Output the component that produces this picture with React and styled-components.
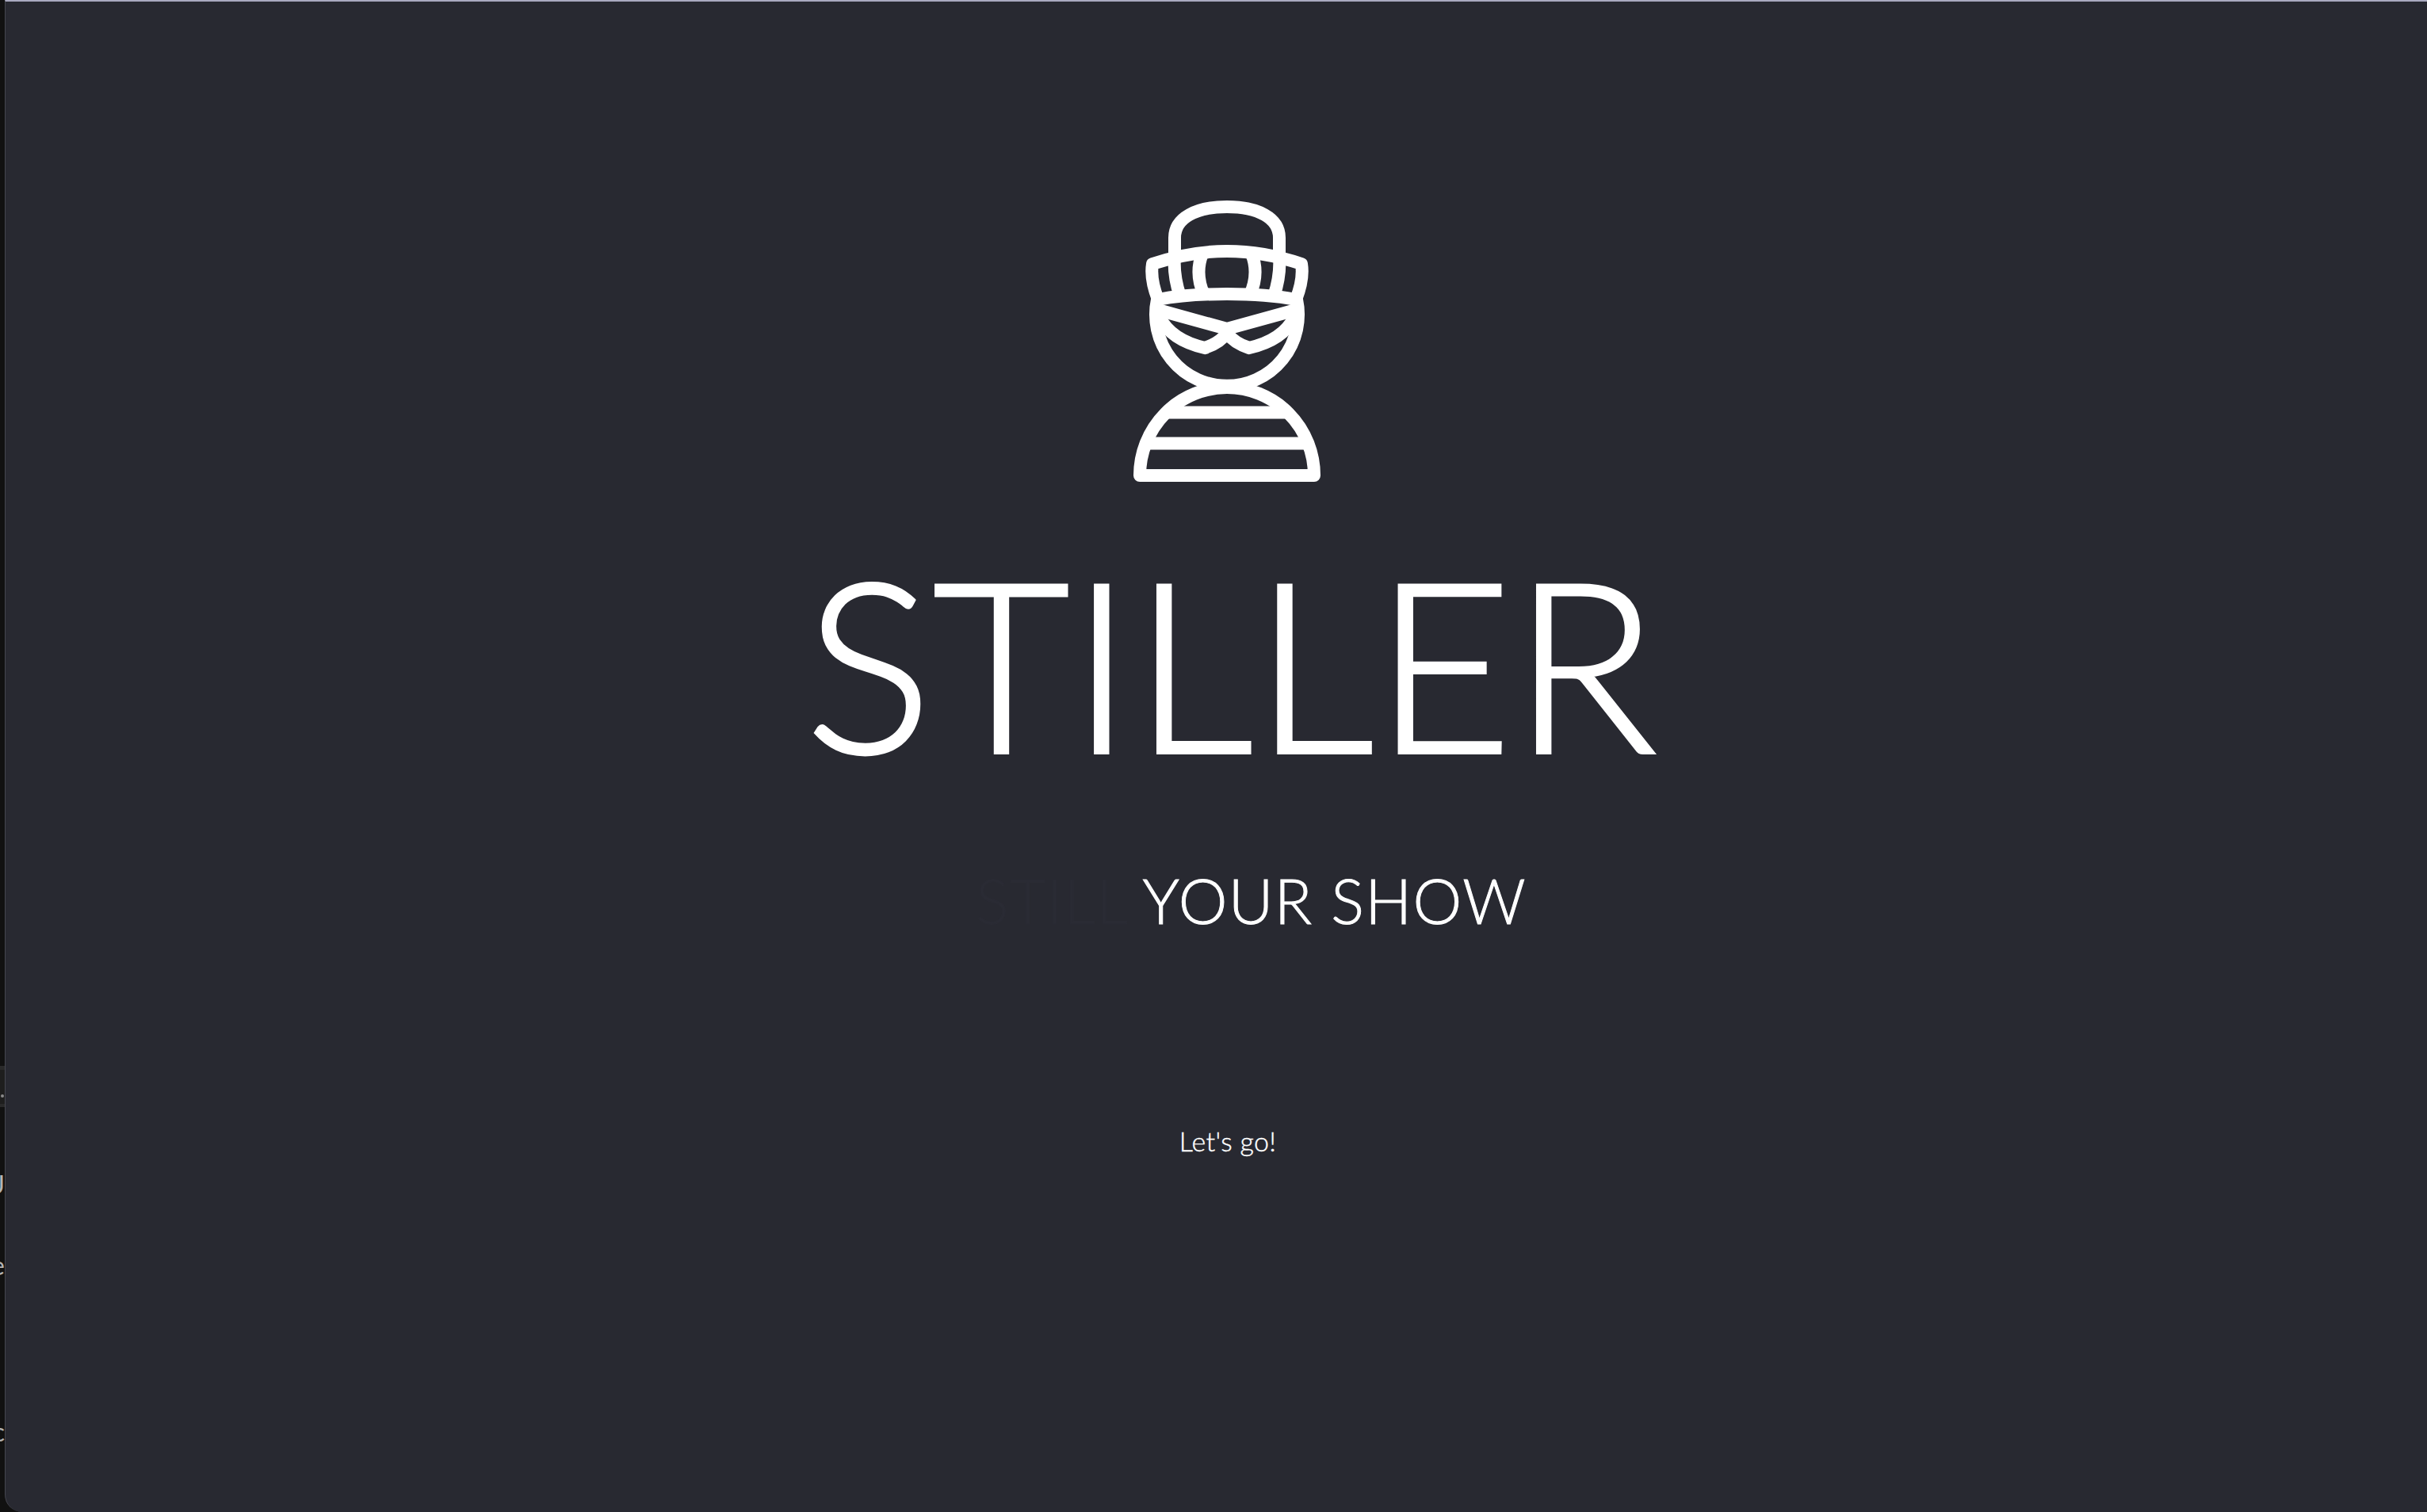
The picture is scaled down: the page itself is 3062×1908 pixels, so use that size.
import React from 'react';
import styled, { createGlobalStyle } from 'styled-components';

const Global = createGlobalStyle`
  html, body { margin: 0; padding: 0; background: #111111; }
  * { box-sizing: border-box; }
`;

const Page = styled.div`
  display: flex;
  width: 3062px;
  height: 1908px;
  overflow: hidden;
  background: #111111;
  font-family: Lato, "Open Sans", sans-serif;
`;

const Rail = styled.aside`
  width: 6px;
  flex: none;
  display: flex;
  flex-direction: column;
  padding-top: 1328px;
  overflow: hidden;
`;

const RailRow = styled.div`
  flex: none;
  height: 52px;
  border-top: 5px solid #2a2a2a;
  border-bottom: 4px solid #2a2a2a;
  background: #1e1e1e;
  margin-top: 17px;
  display: flex;
  align-items: center;
  justify-content: center;
  margin-bottom: ${p => p.$after}px;
`;

const RailDot = styled.span`
  width: 4px;
  height: 4px;
  border-radius: 50%;
  background: #8a8a8a;
  margin-top: 22px;
`;

const RailGlyph = styled.div`
  flex: none;
  width: 6px;
  height: 26px;
  display: flex;
  justify-content: flex-end;
  align-items: center;
  overflow: hidden;
  color: #b4b4b4;
  font-size: 32px;
  line-height: 26px;
  margin-bottom: ${p => p.$after}px;
`;

const Panel = styled.main`
  flex: 1;
  min-width: 0;
  display: flex;
  flex-direction: column;
  align-items: center;
  padding: 248px 0 0 29px;
  background: #282931;
  border-top: 2px solid #a9a9bf;
  border-left: 1px solid #45464f;
  border-bottom-left-radius: 22px;
  color: #ffffff;
`;

const Logo = styled.svg`
  display: block;
  width: 250px;
  height: 360px;
  flex: none;
`;

const Title = styled.h1`
  margin: 75px 0 0 9px;
  font-size: 299px;
  line-height: 1;
  font-weight: 300;
  letter-spacing: 1px;
  -webkit-text-stroke: 4px #ffffff;
  white-space: nowrap;
`;

const Tagline = styled.p`
  margin: 113px 0 0 59px;
  font-size: 78px;
  line-height: 1;
  font-weight: 300;
  letter-spacing: 1.4px;
  -webkit-text-stroke: 1px currentColor;
  white-space: nowrap;
`;

const Ghost = styled.span`
  color: #2a2b34;
`;

const Go = styled.div`
  margin-top: 248px;
  font-size: 34px;
  line-height: 1;
  font-weight: 300;
  letter-spacing: 0.3px;
  -webkit-text-stroke: 0.4px #ffffff;
`;

const Mark = () => (
  <Logo viewBox="1425 250 250 360" fill="none" stroke="#fff" strokeWidth="16" strokeLinejoin="round" strokeLinecap="butt">
    <path d="M1483 320V300C1483 275 1510 261 1549 261C1588 261 1615 275 1615 300V320" />
    <path d="M1462 378C1455 360 1453 345 1455 333C1485 323 1515 317 1549 317C1583 317 1613 323 1643 333C1645 345 1643 360 1636 378C1610 373 1580 371 1549 371C1518 371 1488 373 1462 378Z" />
    <path d="M1483 322Q1481 348 1490 374M1518 320Q1508 345 1520 372M1580 320Q1590 345 1578 372M1615 322Q1617 348 1608 374" />
    <path d="M1461 378A90 90 0 1 0 1637 378" />
    <path d="M1462 391L1549 415L1636 391" strokeLinejoin="miter" />
    <path d="M1464 400Q1478 429 1521 439Q1540 433 1549 420M1634 400Q1620 429 1577 439Q1558 433 1549 420" strokeLinejoin="miter" />
    <path d="M1439 600A110 111 0 0 1 1659 600Z" />
    <path d="M1474 520.5H1624M1447 559.5H1651" />
  </Logo>
);

export default function App() {
  return (
    <Page>
      <Global />
      <Rail>
        <RailRow $after={85}><RailDot /></RailRow>
        <RailGlyph $after={76}>U</RailGlyph>
        <RailGlyph $after={184}>e</RailGlyph>
        <RailGlyph $after={0}>c</RailGlyph>
      </Rail>
      <Panel>
        <Mark />
        <Title>STILLER</Title>
        <Tagline><Ghost>STILL </Ghost>YOUR SHOW</Tagline>
        <Go>Let's go!</Go>
      </Panel>
    </Page>
  );
}
